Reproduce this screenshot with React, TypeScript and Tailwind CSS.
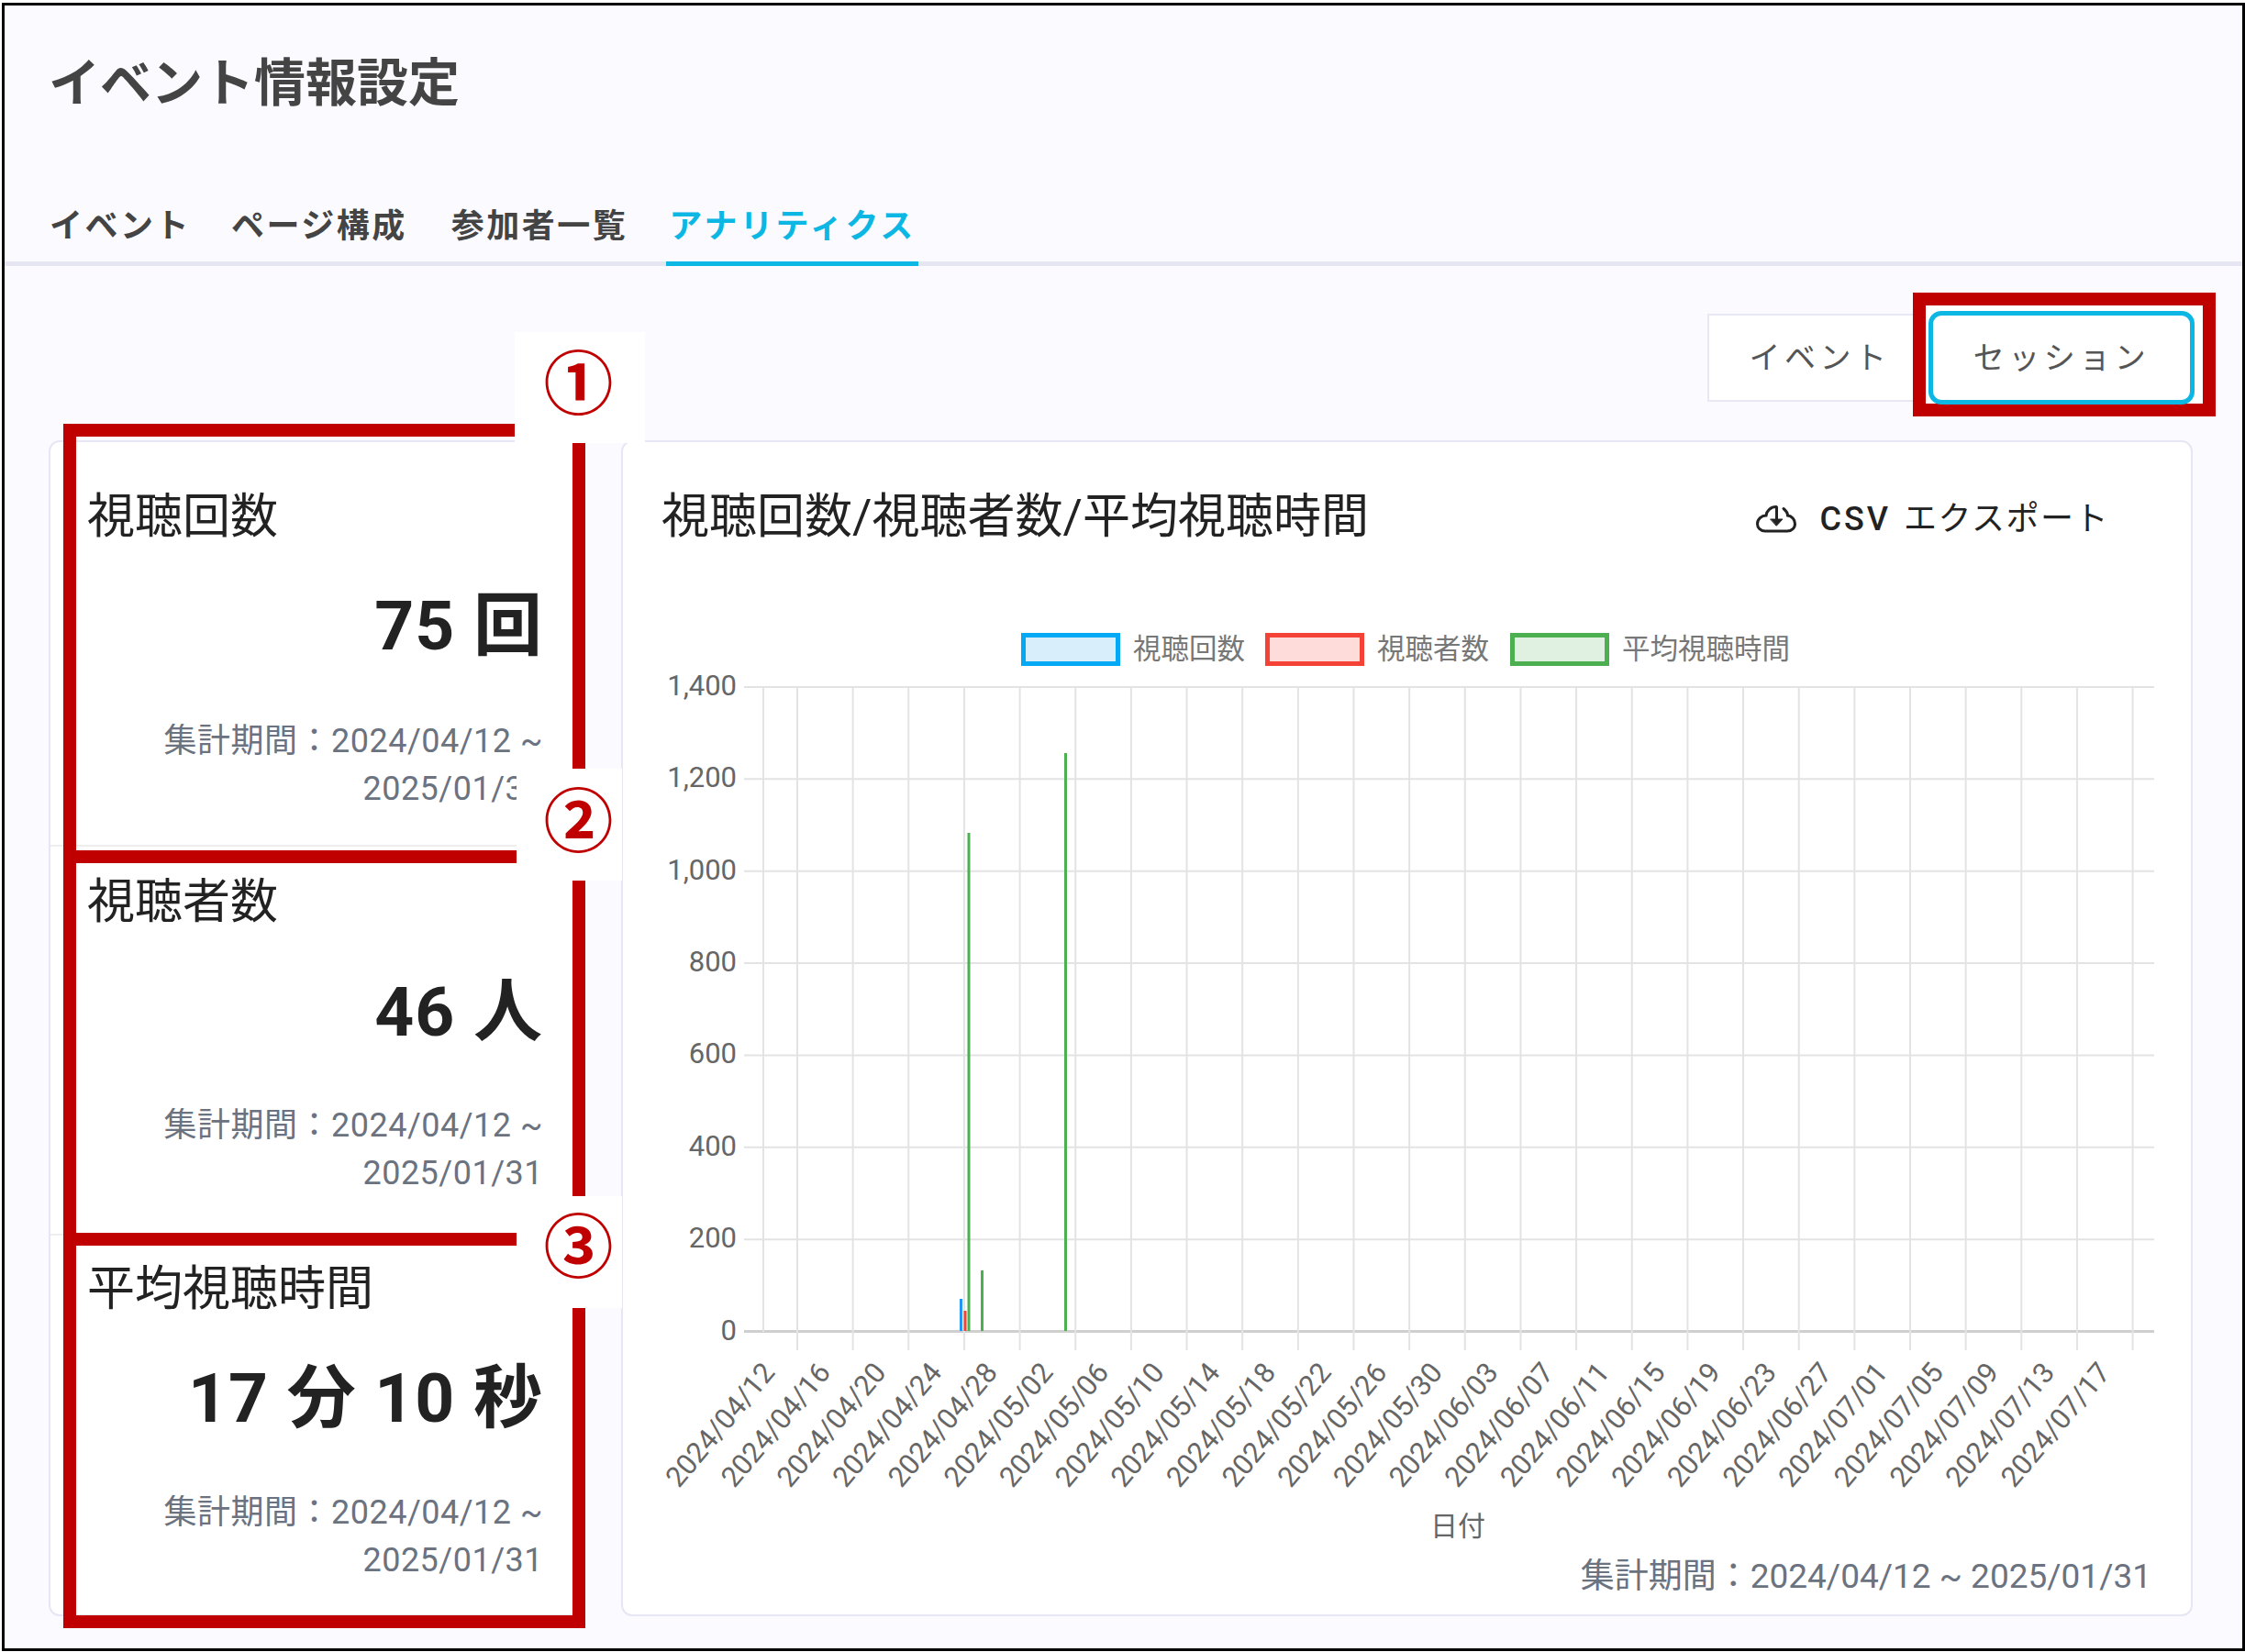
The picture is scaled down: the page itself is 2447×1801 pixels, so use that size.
const dates = [
  "2024/04/12", "2024/04/16", "2024/04/20", "2024/04/24", "2024/04/28",
  "2024/05/02", "2024/05/06", "2024/05/10", "2024/05/14", "2024/05/18",
  "2024/05/22", "2024/05/26", "2024/05/30", "2024/06/03", "2024/06/07",
  "2024/06/11", "2024/06/15", "2024/06/19", "2024/06/23", "2024/06/27",
  "2024/07/01", "2024/07/05", "2024/07/09", "2024/07/13", "2024/07/17",
]

const yTicks = ["1,400", "1,200", "1,000", "800", "600", "400", "200", "0"]

const bars = [
  { x: 1046, top: 1416, color: "#2196f3" },
  { x: 1050.5, top: 1429, color: "#f44336" },
  { x: 1054.5, top: 908, color: "#4caf50" },
  { x: 1069, top: 1385, color: "#4caf50" },
  { x: 1160, top: 821, color: "#4caf50" },
]

const legend = [
  { label: "視聴回数", box: "border-[#03a9f4] bg-[#d9eefb]", gap: "ml-0" },
  { label: "視聴者数", box: "border-[#f44336] bg-[#fddcda]", gap: "ml-[22px]" },
  { label: "平均視聴時間", box: "border-[#4caf50] bg-[#e0f1e1]", gap: "ml-[23px]" },
]

function CloudIcon() {
  return (
    <svg width={44} height={30} viewBox="0 0 44 30" className="mr-[26px]" fill="none" stroke="#222" strokeWidth={3} strokeLinecap="round">
      <path d="M30 3.5C33 6 34.5 9 34.5 11C39 11.5 42.5 15.5 42.5 20C42.5 25 38.5 28 34 28H10C5 28 1.5 24.5 1.5 20C1.5 15 6 11 11 11C11.5 6 16 1.5 22 1.5" />
      <path d="M22.5 2V16" />
      <path d="M16 15H29L22.5 22Z" fill="#222" stroke="#222" strokeWidth={1} strokeLinejoin="round" />
    </svg>
  )
}

function Chart() {
  return (
    <svg width={1709} height={960} viewBox="679 726 1709 960" className="block">
      {/* grid */}
      {yTicks.map((t, i) => {
        const y = 749 + i * 100.36
        return (
          <g key={t}>
            <line x1={811} x2={2348} y1={y} y2={y} stroke={t === "0" ? "#cfcfcf" : "#e3e3e3"} strokeWidth={t === "0" ? 3 : 2} />
            <text x={803} y={y + 9} textAnchor="end" fontSize={31} fill="#666">{t}</text>
          </g>
        )
      })}
      <line x1={832} x2={832} y1={749} y2={1452} stroke="#e3e3e3" strokeWidth={2} />
      {dates.map((d, i) => {
        const x = 869 + i * 60.65
        return (
          <g key={d}>
            <line x1={x} x2={x} y1={749} y2={1472} stroke="#e3e3e3" strokeWidth={2} />
            <text transform={`translate(${x - 23} 1497) rotate(-50)`} textAnchor="end" fontSize={31} fill="#666">{d}</text>
          </g>
        )
      })}
      {/* bars */}
      {bars.map(b => (
        <rect key={b.x} x={b.x} y={b.top} width={3} height={1451 - b.top} fill={b.color} />
      ))}
      <text x={1589} y={1674} textAnchor="middle" fontSize={30} fill="#666">日付</text>
    </svg>
  )
}

function StatRow({ title, value, top, valueGap, periodGap, bordered }: { title: string; value: string; top: string; valueGap: string; periodGap: string; bordered?: boolean }) {
  return (
    <div className={`pl-[40px] pr-[38px] ${top} ${bordered ? "border-t-2 border-[#eeeeee]" : ""}`}>
      <h3 className="text-[52px] leading-[60px] text-[#222]">{title}</h3>
      <p className={`${valueGap} text-right text-[75px] leading-[90px] font-bold tracking-[1px] text-[#222]`}>{value}</p>
      <p className={`${periodGap} text-right text-[36px] leading-[52px] tracking-[0.5px] text-[#6b7280]`}>
        集計期間：2024/04/12 ~ 2025/01/31
      </p>
    </div>
  )
}

function Marker({ n, cls }: { n: string; cls: string }) {
  return (
    <div className={`absolute flex items-center justify-center bg-white text-[76px] leading-none font-bold text-[#c00000] ${cls}`}>
      {n}
    </div>
  )
}

export default function App() {
  return (
    <div className="h-[1801px] w-[2447px] bg-white pt-[3px] pl-[2px] font-['Roboto','Noto_Sans_CJK_JP',sans-serif]">
      <div className="relative h-[1797px] border-[3px] border-black bg-[#fbfbff]">
        {/* Header */}
        <div className="flex h-[170px] items-center pl-[48px]">
          <h1 className="text-[56px] font-bold text-[#444]">イベント情報設定</h1>
        </div>

        {/* Tabs */}
        <div className="flex h-[114px] items-end border-b-[5px] border-[#e6e6f2] pl-[46px]">
          <div className="px-[3px] pb-[14px] text-[36px] leading-[48px] font-bold tracking-[2.5px] text-[#444]">イベント</div>
          <div className="ml-[38px] px-[3px] pb-[14px] text-[36px] leading-[48px] font-bold tracking-[2.5px] text-[#444]">ページ構成</div>
          <div className="ml-[42px] px-[3px] pb-[14px] text-[36px] leading-[48px] font-bold tracking-[2.5px] text-[#444]">参加者一覧</div>
          <div className="-mb-[5px] ml-[39px] border-b-[5px] border-[#0db7e3] px-[3px] pb-[14px] text-[36px] leading-[48px] font-bold tracking-[3px] text-[#0db7e3]">アナリティクス</div>
        </div>

        {/* Event / session toggle */}
        <div className="mt-[49px] flex items-center justify-end pr-[52px]">
          <button className="h-[96px] w-[241px] border-2 border-[#e8e8f4] bg-white pl-[4px] text-[34px] tracking-[4.5px] text-[#555]">イベント</button>
          <div className="relative">
            <div className="absolute top-[-20px] left-[-17px] h-[135px] w-[330px] border-[14px] border-[#c00000] bg-white" />
            <button className="relative h-[102px] w-[290px] rounded-[14px] border-[5px] border-[#0db7e3] bg-white text-[34px] tracking-[4.5px] text-[#555]">セッション</button>
          </div>
        </div>

        {/* Cards */}
        <div className="mt-[39px] ml-[48px] flex h-[1282px] w-[2337px] gap-[45px]">
          <div className="h-full w-[579px] overflow-hidden rounded-xl border-2 border-[#e6e6f4] bg-white">
            <div className="h-[439px]">
              <StatRow title="視聴回数" value="75 回" top="pt-[52px]" valueGap="mt-[43px]" periodGap="mt-[55px]" />
            </div>
            <div className="h-[424px]">
              <StatRow title="視聴者数" value="46 人" top="pt-[31px]" valueGap="mt-[44px]" periodGap="mt-[53px]" bordered />
            </div>
            <StatRow title="平均視聴時間" value="17 分 10 秒" top="pt-[29px]" valueGap="mt-[43px]" periodGap="mt-[54px]" bordered />
          </div>

          <div className="h-full w-[1713px] rounded-xl border-2 border-[#e6e6f4] bg-white">
            <div className="flex items-center justify-between pt-[52px] pr-[89px] pl-[42px]">
              <h2 className="text-[52px] leading-[60px] text-[#222]">視聴回数/視聴者数/平均視聴時間</h2>
              <div className="mt-[4px] flex items-center text-[36px] text-[#222]">
                <CloudIcon />
                <span className="font-medium tracking-[3px]">CSV</span>
                <span className="ml-[14px] tracking-[1.5px]">エクスポート</span>
              </div>
            </div>

            <div className="mt-[96px] ml-[434px] flex h-[36px] items-center">
              {legend.map(l => (
                <div key={l.label} className={`flex items-center ${l.gap}`}>
                  <div className={`h-[36px] w-[108px] border-[5px] ${l.box}`} />
                  <span className="ml-[14px] text-[30.5px] leading-[36px] text-[#777]">{l.label}</span>
                </div>
              ))}
            </div>

            <Chart />

            <p className="mt-[8px] pr-[43px] text-right text-[37px] leading-[50px] text-[#6b7280]">
              集計期間：2024/04/12 ~ 2025/01/31
            </p>
          </div>
        </div>

        {/* Annotations */}
        <div className="absolute top-[456px] left-[64px] h-[1313px] w-[569px] border-[14px] border-[#c00000]" />
        <div className="absolute top-[921px] left-[64px] h-[14px] w-[494px] bg-[#c00000]" />
        <div className="absolute top-[1338px] left-[64px] h-[14px] w-[494px] bg-[#c00000]" />
        <Marker n="①" cls="left-[556px] top-[356px] h-[121px] w-[142px] pr-[3px] pb-[6px]" />
        <Marker n="②" cls="left-[558px] top-[832px] h-[122px] w-[115px] pl-[20px] pb-[4px]" />
        <Marker n="③" cls="left-[558px] top-[1298px] h-[122px] w-[115px] pl-[20px] pb-[8px]" />
      </div>
    </div>
  )
}
